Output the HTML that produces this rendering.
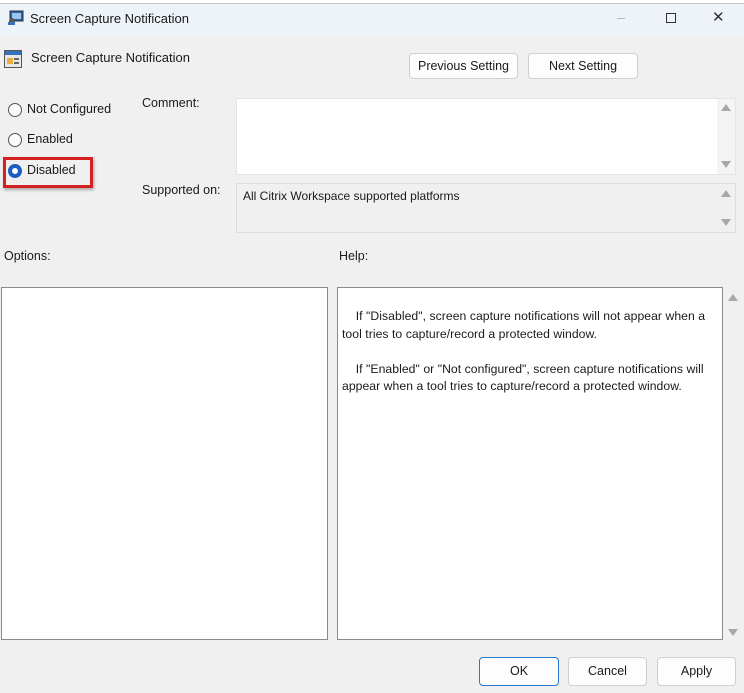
<!DOCTYPE html>
<html><head><meta charset="utf-8"><style>
*{margin:0;padding:0;box-sizing:border-box}
body{width:744px;height:693px;background:#f0f0f0;font-family:"Liberation Sans",sans-serif;font-size:12px;color:#1a1a1a;position:relative;overflow:hidden}
.a{position:absolute;white-space:nowrap}
.btn{position:absolute;background:#fdfdfd;border:1px solid #d0d0d0;border-radius:4px;text-align:center;font-size:12.5px;color:#1a1a1a}
.radio{position:absolute;width:14px;height:14px;border:1px solid #555;border-radius:50%;background:#fafafa}
.up,.dn{position:absolute;width:0;height:0;border-left:5px solid transparent;border-right:5px solid transparent}
.up{border-bottom:7px solid #a8a8a8}.dn{border-top:7px solid #a8a8a8}
</style></head><body>
<div class="a" style="left:0;top:0;width:744px;height:4px;background:#fff"></div>
<div class="a" style="left:0;top:3px;width:744px;height:33px;background:#eef3f9;border-top:1px solid #c8c8c8"></div>
<svg class="a" style="left:7px;top:10px" width="18" height="16"><rect x="3" y="1" width="13" height="10" fill="#2a5fb0" stroke="#333"/><rect x="5" y="3" width="9" height="6" fill="#9cc4f0"/><circle cx="5" cy="11" r="3" fill="#555"/><rect x="1" y="12" width="7" height="3" fill="#3a6fbf"/></svg>
<div class="a" style="left:30px;top:11px;font-size:13px">Screen Capture Notification</div>
<div class="a" style="left:617px;top:18px;width:8px;height:1px;background:#bbb"></div>
<div class="a" style="left:666px;top:13px;width:10px;height:10px;border:1px solid #333"></div>
<div class="a" style="left:712px;top:8px;font-size:15px;color:#333">✕</div>
<svg class="a" style="left:4px;top:50px" width="18" height="18"><rect x="0.5" y="0.5" width="17" height="17" fill="#e8e8e8" stroke="#555"/><rect x="1" y="1" width="16" height="4" fill="#3a6fbf"/><rect x="3" y="8" width="6" height="6" fill="#e8b040"/><rect x="10" y="8" width="5" height="2" fill="#666"/><rect x="10" y="12" width="5" height="2" fill="#666"/></svg>
<div class="a" style="left:31px;top:50px;font-size:13px">Screen Capture Notification</div>
<div class="btn" style="left:409px;top:53px;width:109px;height:26px;line-height:24px">Previous Setting</div>
<div class="btn" style="left:528px;top:53px;width:110px;height:26px;line-height:24px">Next Setting</div>
<div class="radio" style="left:8px;top:103px"></div><div class="a" style="left:27px;top:102px;font-size:12.5px">Not Configured</div>
<div class="radio" style="left:8px;top:133px"></div><div class="a" style="left:27px;top:132px;font-size:12.5px">Enabled</div>
<div class="radio" style="left:8px;top:164px;border:4px solid #1a5fc0;background:#fff"></div><div class="a" style="left:27px;top:163px;font-size:12.5px">Disabled</div>
<div class="a" style="left:3px;top:157px;width:90px;height:31px;border:3px solid #d42020;box-shadow:1px 2px 3px rgba(0,0,0,.3)"></div>
<div class="a" style="left:142px;top:96px;font-size:12.5px">Comment:</div>
<div class="a" style="left:236px;top:98px;width:500px;height:77px;background:#fff;border:1px solid #e4e4e4"></div>
<div class="a" style="left:717px;top:99px;width:18px;height:75px;background:#f4f4f4"></div>
<div class="up" style="left:721px;top:104px"></div><div class="dn" style="left:721px;top:161px"></div>
<div class="a" style="left:142px;top:183px;font-size:12.5px">Supported on:</div>
<div class="a" style="left:236px;top:183px;width:500px;height:50px;background:#f0f0f0;border:1px solid #dcdcdc"></div>
<div class="a" style="left:243px;top:189px;font-size:12px">All Citrix Workspace supported platforms</div>
<div class="up" style="left:721px;top:190px"></div><div class="dn" style="left:721px;top:219px"></div>
<div class="a" style="left:4px;top:249px;font-size:12.5px">Options:</div>
<div class="a" style="left:339px;top:249px;font-size:12.5px">Help:</div>
<div class="a" style="left:1px;top:287px;width:327px;height:353px;background:#fff;border:1px solid #8a8a8a"></div>
<div class="a" style="left:337px;top:287px;width:386px;height:353px;background:#fff;border:1px solid #8a8a8a"></div>
<div class="a" style="left:342px;top:308px;font-size:12.2px;line-height:17.5px;letter-spacing:0.05px">&nbsp;&nbsp;&nbsp;&nbsp;If "Disabled", screen capture notifications will not appear when a<br>tool tries to capture/record a protected window.<br><br>&nbsp;&nbsp;&nbsp;&nbsp;If "Enabled" or "Not configured", screen capture notifications will<br>appear when a tool tries to capture/record a protected window.</div>
<div class="up" style="left:728px;top:294px"></div><div class="dn" style="left:728px;top:629px"></div>
<div class="btn" style="left:479px;top:657px;width:80px;height:29px;line-height:27px;border:1px solid #2a78d0">OK</div>
<div class="btn" style="left:568px;top:657px;width:79px;height:29px;line-height:27px">Cancel</div>
<div class="btn" style="left:657px;top:657px;width:79px;height:29px;line-height:27px">Apply</div>
</body></html>
